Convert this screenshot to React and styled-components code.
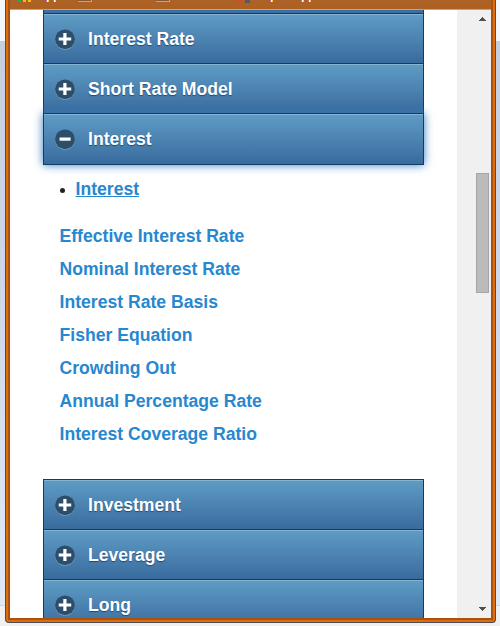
import React from "react";
import styled, { createGlobalStyle, css } from "styled-components";

const GlobalStyle = createGlobalStyle`
  * { box-sizing: border-box; }
  body { margin: 0; overflow: hidden; font-family: "Liberation Sans", Arial, sans-serif; }
`;

const Desktop = styled.div`
  width: 500px;
  height: 626px;
  padding-left: 5px;
  overflow: hidden;
  background: linear-gradient(#f5f6fa 0 41px, #c5cedf 41px, #cfd8ea 310px, #dfe8f5 605px, #d3d6da 605px 606px, #f0f0f0 606px);
`;

const Window = styled.div`
  width: 491px;
  height: 623px;
  border: 1px solid #4c4c55;
  border-top: 0;
  border-radius: 0 0 4px 4px;
  background: #e06c0c;
  padding: 0 2px 2px;
`;

const Frame = styled.div`
  height: 620px;
  padding: 0 2px 2px;
  background: #a9520f;
`;

const BookmarkBar = styled.div`
  height: 10px;
  background: linear-gradient(#ac6228, #ae601f);
  border-bottom: 1px solid #b7a69b;
  overflow: hidden;
  svg { display: block; }
`;

const Viewport = styled.div`
  display: flex;
  height: 608px;
  background: #fff;
  overflow: hidden;
`;

const Page = styled.main`
  width: 447px;
  padding-left: 33px;
  overflow: hidden;
`;

const Accordion = styled.div`
  width: 381px;
`;

const AccordionHeader = styled.button`
  display: flex;
  align-items: flex-start;
  width: 381px;
  height: ${(p) => (p.$open ? 52 : 51)}px;
  margin: 0 0 -1px;
  padding: 15px 0 0 11px;
  border: 1px solid #0b3f66;
  background: linear-gradient(#5f9cc5, #396b9e);
  box-shadow: inset 0 1px 0 #86b5d2;
  color: #fff;
  font: bold 17.6px/20px "Liberation Sans", Arial, sans-serif;
  text-align: left;
  text-shadow: 0 1px 1px #194b7e;
  position: relative;
  ${(p) => p.$open && css`
    z-index: 1;
    box-shadow: inset 0 1px 0 #86b5d2, 0 0 9px #387bbe;
  `}
  svg { flex: none; margin-right: 13px; }
`;

const PartialHeader = styled.div`
  width: 381px;
  height: 3px;
  border: solid #0b3f66;
  border-width: 0 1px;
  background: #3b6fa3;
`;

const Panel = styled.section`
  height: 315px;
  padding: 14px 0 0 16.5px;
`;

const TopicList = styled.ul`
  list-style: none;
  margin: 0;
  padding: 0;
  font-size: 17.6px;
  line-height: 22px;
`;

const CurrentTopic = styled.li`
  display: flex;
  align-items: center;
  height: 22px;
  &::before {
    content: "";
    width: 5px;
    height: 5px;
    margin: 2px 11px 0 0;
    border-radius: 50%;
    background: #222;
  }
`;

const TopicLink = styled.a`
  color: #2787cf;
  font-weight: bold;
  text-decoration: ${(p) => (p.$current ? "underline" : "none")};
  text-decoration-thickness: 1px;
  text-underline-offset: 1px;
`;

const RelatedLinks = styled.nav`
  display: flex;
  flex-direction: column;
  margin-top: 20px;
  font-size: 17.6px;
  line-height: 33px;
`;

const Scrollbar = styled.div`
  display: flex;
  flex-direction: column;
  justify-content: space-between;
  align-items: flex-end;
  width: 34px;
  height: 608px;
  padding: 7px 5px 7px 0;
  background: #f0f0f0;
`;

const Thumb = styled.div`
  width: 13px;
  height: 120px;
  margin: 0 -3px 163px 0;
  border: 1px solid #a6a6a6;
  background: #bbb;
`;

function ToggleIcon({ open }) {
  return (
    <svg width="20" height="21" viewBox="0 0 20 21" aria-hidden="true">
      <circle cx="10" cy="11" r="9.9" fill="#77a4c4" />
      <circle cx="10" cy="10.3" r="9.9" fill="#2d4e6b" />
      <path
        d={open ? "M4.6 8.5h11v3.2h-11z" : "M3.7 8.4h4.6V4h3.2v4.4h4.7v3.2h-4.7V16H8.3v-4.4H3.7z"}
        fill="#fff"
      />
    </svg>
  );
}

function Header({ label, open }) {
  return (
    <AccordionHeader $open={open} aria-expanded={!!open}>
      <ToggleIcon open={open} />
      {label}
    </AccordionHeader>
  );
}

const related = [
  "Effective Interest Rate",
  "Nominal Interest Rate",
  "Interest Rate Basis",
  "Fisher Equation",
  "Crowding Out",
  "Annual Percentage Rate",
  "Interest Coverage Ratio",
];

export default function App() {
  return (
    <Desktop>
      <GlobalStyle />
      <Window>
        <Frame>
          <BookmarkBar>
            <svg width="481" height="9" shapeRendering="crispEdges" aria-hidden="true">
              <path d="M8 0h3v2H8z" fill="#24a95b" />
              <path d="M13 0h3v2h-3zM18 0h3v2h-3z" fill="#ffb612" />
              <path d="M37 0h1v2h-1zM44 0h1v2h-1zM261 0h1v2h-1zM292 0h1v2h-1zM299 0h1v2h-1z" fill="#fff" />
              <path d="M36 0h1v2h-1zM43 0h1v2h-1zM260 0h1v2h-1zM291 0h1v2h-1zM298 0h1v2h-1z" fill="#b86bb4" />
              <path d="M38 0h1v2h-1zM45 0h1v2h-1zM262 0h1v2h-1zM293 0h1v2h-1zM300 0h1v2h-1z" fill="#f0d04c" />
              <path d="M68 1h14v1H68zM81 0h1v1h-1zM146 1h14v1h-14zM159 0h1v1h-1z" fill="#c6a489" />
              <path d="M68 0h13v1H68zM146 0h13v1h-13z" fill="#8a5733" />
              <path d="M226 0h6v2h-3z" fill="#db4437" />
              <path d="M235 0h5v3h-5z" fill="#555b63" />
            </svg>
          </BookmarkBar>
          <Viewport>
            <Page>
              <Accordion>
                <PartialHeader />
                <Header label="Interest Rate" />
                <Header label="Short Rate Model" />
                <Header label="Interest" open />
                <Panel>
                  <TopicList>
                    <CurrentTopic>
                      <TopicLink $current>Interest</TopicLink>
                    </CurrentTopic>
                  </TopicList>
                  <RelatedLinks>
                    {related.map((name) => (
                      <TopicLink key={name}>{name}</TopicLink>
                    ))}
                  </RelatedLinks>
                </Panel>
                <Header label="Investment" />
                <Header label="Leverage" />
                <Header label="Long" />
              </Accordion>
            </Page>
            <Scrollbar>
              <svg width="7" height="4" shapeRendering="crispEdges" aria-hidden="true">
                <path d="M3 0h1v1h1v1h1v1h1v1H0V3h1V2h1V1h1z" fill="#505050" />
              </svg>
              <Thumb />
              <svg width="7" height="4" shapeRendering="crispEdges" aria-hidden="true">
                <path d="M0 0h7v1H6v1H5v1H4v1H3V3H2V2H1V1H0z" fill="#505050" />
              </svg>
            </Scrollbar>
          </Viewport>
        </Frame>
      </Window>
    </Desktop>
  );
}
